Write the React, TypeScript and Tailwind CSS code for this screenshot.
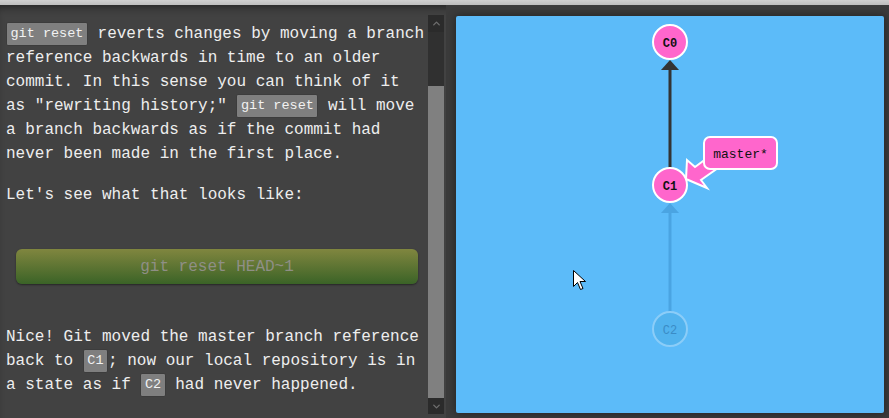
import * as React from 'react'
import { ChevronUp, ChevronDown } from 'lucide-react'

const mono = { fontFamily: '"Liberation Mono", "Courier New", monospace' }

function Chip({ children }: { children: React.ReactNode }) {
  return (
    <span className="inline-block h-[24px] px-[3.5px] align-top border border-[#3c3c3c] rounded-[2px] bg-[#7f7f7f] text-[13.5px] leading-[22px] text-[#f2f2f2]">
      {children}
    </span>
  )
}

function Scrollbar() {
  return (
    <div className="w-[16px] h-[399px] flex flex-col bg-[#303030]">
      <div className="h-[17px] flex items-center justify-center bg-[#2b2b2b]">
        <ChevronUp className="w-[11px] h-[11px] text-[#6e6e6e]" strokeWidth={3} />
      </div>
      <div className="h-[54px]" />
      <div className="h-[312px] bg-[#808080]" />
      <div className="h-[16px] flex items-center justify-center bg-[#2b2b2b]">
        <ChevronDown className="w-[11px] h-[11px] text-[#6e6e6e]" strokeWidth={3} />
      </div>
    </div>
  )
}

function GitCanvas() {
  return (
    <div className="relative w-full h-full bg-[#5cbbf9] rounded-[2px] shadow-[0_0_8px_rgba(0,0,0,0.45)]">
      <svg className="absolute inset-0" width="428" height="397" viewBox="0 0 428 397">
        {/* C1 -> C0 */}
        <line x1="214" y1="152" x2="214" y2="53" stroke="#333" strokeWidth="3" />
        <polygon points="214,44 205,54 223,54" fill="#333" />
        {/* C2 -> C1 (faded) */}
        <line x1="214" y1="296" x2="214" y2="196" stroke="#4aa4e2" strokeWidth="3" />
        <polygon points="214,187 205,197 223,197" fill="#4aa4e2" />

        <circle cx="214" cy="26" r="17" fill="#ff66cc" stroke="#fff" strokeWidth="2" />
        <text x="214" y="30.5" textAnchor="middle" fontSize="12" fontWeight="bold" fill="#111" style={mono}>C0</text>

        <circle cx="214" cy="169" r="17" fill="#ff66cc" stroke="#fff" strokeWidth="2" />
        <text x="214" y="173.5" textAnchor="middle" fontSize="12" fontWeight="bold" fill="#111" style={mono}>C1</text>

        <circle cx="214" cy="313" r="17" fill="#52b3ee" stroke="#8bcdf8" strokeWidth="2" />
        <text x="214" y="317.5" textAnchor="middle" fontSize="12" fill="#3a8cc6" style={mono}>C2</text>

        {/* master* branch */}
        <polygon
          points="230,163 231,144 239,151 254,140 262,152 245,164 251,172"
          fill="#ff66cc"
          stroke="#fff"
          strokeWidth="2"
          strokeLinejoin="miter"
        />
        <rect x="248" y="121" width="73" height="32" rx="6" fill="#ff66cc" stroke="#fff" strokeWidth="2" />
        <text x="284.5" y="141.5" textAnchor="middle" fontSize="13" fill="#111" style={mono}>master*</text>

        {/* mouse pointer */}
        <path
          d="M117.5 254.5 L117.5 270.5 L121.5 266.5 L124.5 273.5 L127 272.5 L124 265.5 L129.5 265.5 Z"
          fill="#fff"
          stroke="#000"
          strokeWidth="1"
        />
      </svg>
    </div>
  )
}

export default function App() {
  return (
    <div className="w-[889px] h-[418px] flex flex-col overflow-hidden bg-[#424242]">
      <div className="h-[5px] bg-gradient-to-b from-[#cfcfcf] to-[#bdbdbd]" />
      <div className="flex-1 flex shadow-[inset_0_7px_8px_-5px_rgba(0,0,0,0.5)]">
        <div className="w-[446px] pt-[10px] flex items-start">
          <div className="w-[428px] h-[399px] overflow-hidden pl-[6px] pt-[7px] text-[16px] leading-[24px] text-[#eeeeee]" style={mono}>
            <p className="mb-[17px]">
              <Chip>git reset</Chip> reverts changes by moving a branch reference backwards in time to an older commit. In this sense you can think of it as "rewriting history;" <Chip>git reset</Chip> will move a branch backwards as if the commit had never been made in the first place.
            </p>
            <p>Let's see what that looks like:</p>
            <div className="mt-[42px] mb-[41px] mx-[10px] h-[35px] rounded-[6px] bg-gradient-to-b from-[#80863f] to-[#3a6327] shadow-[0_1px_2px_rgba(0,0,0,0.45)] flex items-center justify-center text-[#8f8f86]">
              git reset HEAD~1
            </div>
            <p>
              Nice! Git moved the master branch reference back to <Chip>C1</Chip>; now our local repository is in a state as if <Chip>C2</Chip> had never happened.
            </p>
          </div>
          <Scrollbar />
        </div>
        <div className="flex-1 pl-[10px] pt-[11px] pr-[5px] pb-[5px] bg-[#3b3b3b]">
          <GitCanvas />
        </div>
      </div>
    </div>
  )
}
